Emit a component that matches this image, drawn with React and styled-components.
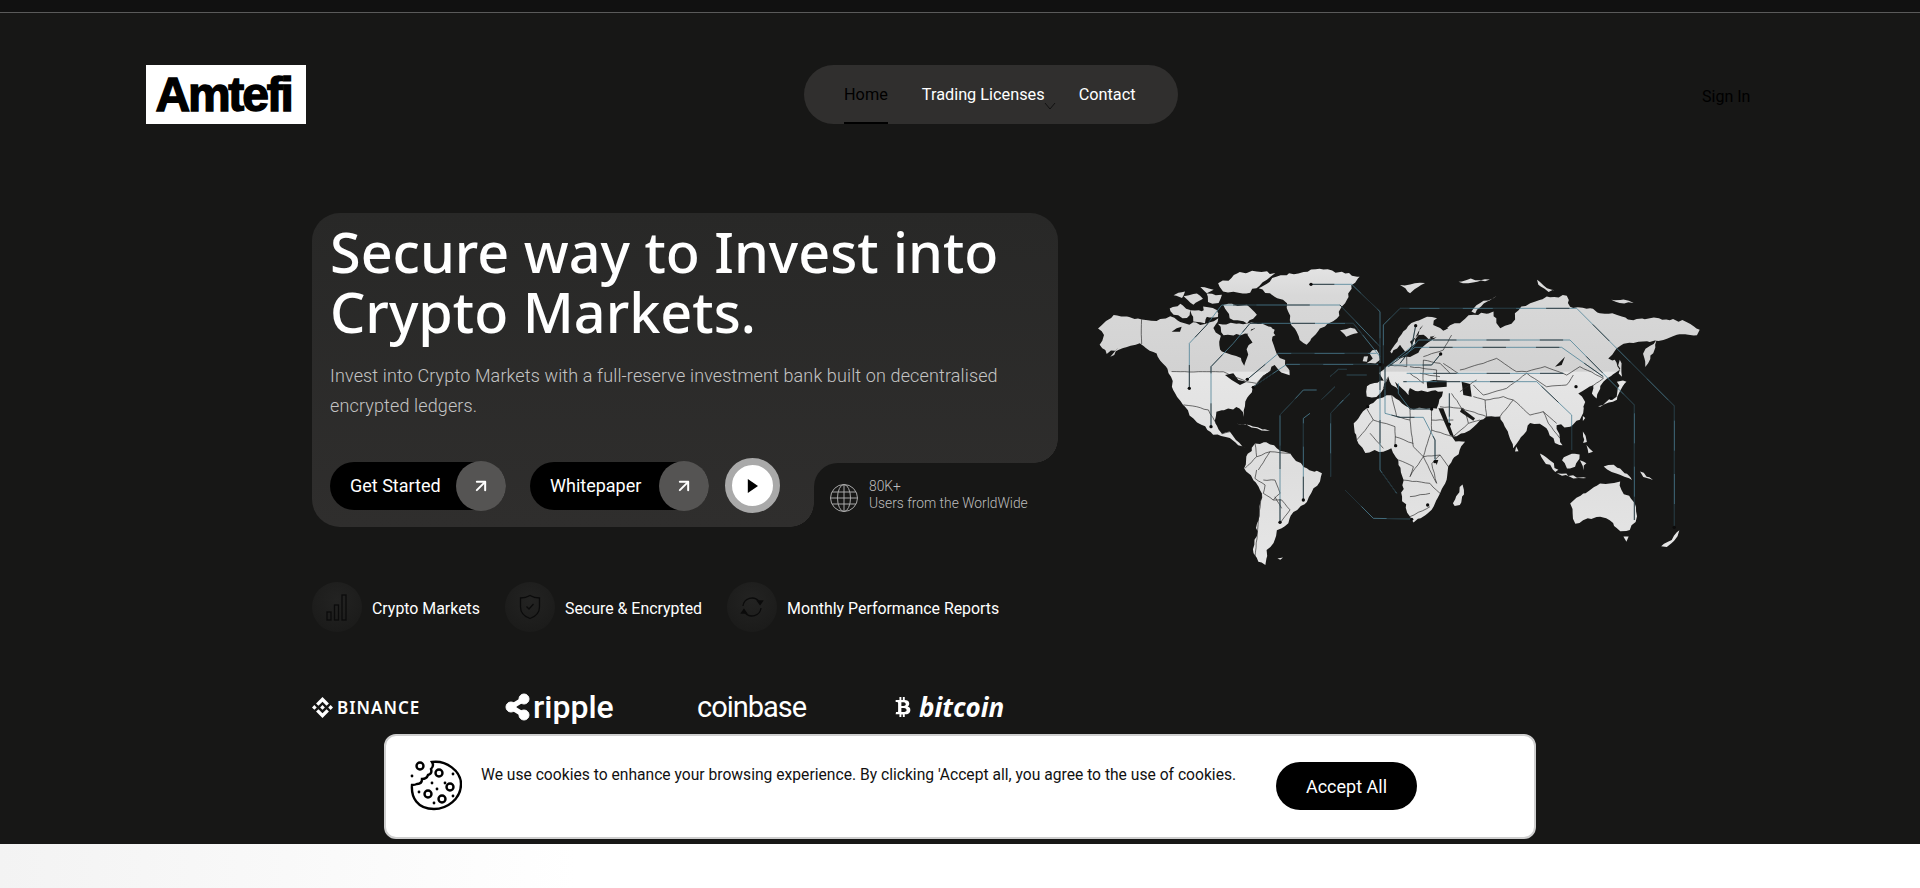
import React from 'react';
import styled, { createGlobalStyle } from 'styled-components';
import { ArrowUpRight } from 'lucide-react';
import { SiBinance } from 'react-icons/si';
import { FaBtc } from 'react-icons/fa';

const GlobalStyle = createGlobalStyle`
  html, body {
    margin: 0;
    padding: 0;
    background: #fff;
  }
  * {
    box-sizing: border-box;
  }
  body {
    font-family: Roboto, "Noto Sans", sans-serif;
    overflow: hidden;
  }
`;

const PAGE_BG = '#171716';

const Page = styled.div`
  width: 1920px;
  height: 888px;
  overflow: hidden;
  background: linear-gradient(90deg, #f3f3f3, #ffffff 30%);
`;

const TopStrip = styled.div`
  height: 13px;
  background: #111111;
  border-bottom: 1px solid #5a5a5a;
`;

const Dark = styled.div`
  height: 831px;
  background: ${PAGE_BG};
  overflow: hidden;
`;

const Header = styled.header`
  display: grid;
  grid-template-columns: 658px 898px auto;
  align-items: center;
  padding: 52px 0 0 146px;
`;

const Logo = styled.div`
  width: 160px;
  height: 59px;
  padding-right: 5px;
  background: #fff;
  color: #000;
  font-family: "Liberation Sans", sans-serif;
  font-weight: 700;
  font-size: 48px;
  letter-spacing: -2.2px;
  line-height: 59px;
  text-align: center;
  -webkit-text-stroke: 1.4px #000;
`;

const Nav = styled.nav`
  width: 374px;
  height: 59px;
  border-radius: 30px;
  background: #302f2e;
  display: flex;
  align-items: center;
  gap: 34px;
  padding-left: 40px;
`;

const NavItem = styled.a`
  position: relative;
  height: 59px;
  line-height: 59px;
  font-size: 16.3px;
  color: ${(p) => (p.$active ? '#000' : '#fff')};
  border-bottom: ${(p) => (p.$active ? '2px solid #000' : 'none')};
  white-space: nowrap;
`;

const Caret = styled.svg`
  position: absolute;
  right: -12px;
  top: 36px;
  width: 14px;
  height: 10px;
`;

const SignIn = styled.a`
  font-size: 16px;
  color: #000;
  padding-top: 3px;
`;

const HeroRow = styled.section`
  display: flex;
  align-items: flex-start;
  gap: 2px;
  margin: 89px 0 0 312px;
`;

const HeroCard = styled.div`
  position: relative;
  width: 746px;
  height: 314px;
  padding: 8px 18px 12px;
  border-radius: 28px;
  background: linear-gradient(180deg, #282827, #2f2e2d);
`;

const Title = styled.h1`
  margin: 0;
  font-family: "Noto Sans", sans-serif;
  font-size: 55.7px;
  line-height: 60px;
  font-weight: 500;
  color: #fff;
`;

const Lead = styled.p`
  margin: 20px 0 0;
  width: 680px;
  font-size: 18px;
  letter-spacing: 0.13px;
  line-height: 30px;
  font-weight: 300;
  color: #c4c4c4;
`;

const Actions = styled.div`
  display: flex;
  align-items: center;
  margin-top: 37px;
`;

const PillButton = styled.button`
  display: flex;
  align-items: center;
  justify-content: space-between;
  height: 48px;
  width: ${(p) => p.$w}px;
  margin-right: ${(p) => p.$mr}px;
  padding: 0 0 0 20px;
  border: 0;
  border-radius: 24px;
  background: #000;
  color: #fff;
  font-family: inherit;
  font-size: 18px;
`;

const ArrowCircle = styled.span`
  width: 50px;
  height: 50px;
  border-radius: 50%;
  background: #555453;
  color: #fff;
  display: flex;
  align-items: center;
  justify-content: center;
`;

const PlayButton = styled.button`
  width: 55px;
  height: 55px;
  border-radius: 50%;
  border: 7px solid #a9a9a9;
  background: #fff;
  padding: 0;
  display: flex;
  align-items: center;
  justify-content: center;
`;

const StatsNotch = styled.div`
  position: absolute;
  right: 0;
  bottom: 0;
  width: 244px;
  height: 64px;
  background: ${PAGE_BG};
  border-top-left-radius: 24px;
  display: flex;
  align-items: center;
  gap: 10px;
  padding: 6px 0 0 15px;

  &::before,
  &::after {
    content: '';
    position: absolute;
    width: 24px;
    height: 24px;
    background: radial-gradient(circle at 0 0, transparent 23.5px, ${PAGE_BG} 24px);
  }
  &::before {
    right: 0;
    top: -24px;
  }
  &::after {
    left: -24px;
    bottom: 0;
  }
`;

const StatsText = styled.div`
  margin-bottom: 7px;
  font-size: 13.8px;
  line-height: 17px;
  font-weight: 300;
  color: #bdbdbd;
`;

const Features = styled.div`
  display: flex;
  gap: 25px;
  margin: 2px 0 0 312px;
`;

const Feature = styled.div`
  display: flex;
  align-items: center;
  gap: 10px;
  padding-top: 2px;
  font-size: 15.9px;
  color: #fff;
`;

const FeatureIcon = styled.span`
  width: 50px;
  height: 50px;
  margin-top: -2px;
  border-radius: 50%;
  background: radial-gradient(circle at 50% 35%, #232322, #191918);
  display: flex;
  align-items: center;
  justify-content: center;
`;

const Brands = styled.div`
  display: flex;
  align-items: center;
  height: 40px;
  margin: 55px 0 0 312px;
  color: #fff;
`;

const Brand = styled.span`
  display: flex;
  align-items: center;
  gap: ${(p) => p.$gap || 4}px;
  width: ${(p) => p.$w}px;
  font-family: ${(p) => p.$font || '"Noto Sans"'}, sans-serif;
  font-size: ${(p) => p.$size}px;
  font-weight: ${(p) => p.$weight || 600};
  font-style: ${(p) => (p.$italic ? 'italic' : 'normal')};
  letter-spacing: ${(p) => p.$ls || 0}px;
`;

const CookieBar = styled.div`
  position: fixed;
  left: 384px;
  top: 734px;
  width: 1152px;
  height: 105px;
  background: #fff;
  border: 2px solid #cfcfcf;
  border-radius: 12px;
  display: flex;
  align-items: flex-start;
  padding: 23px 0 0 24px;
`;

const CookieText = styled.p`
  margin: 5px 0 0 19px;
  width: 795px;
  font-size: 15.65px;
  line-height: 22px;
  color: #111;
  white-space: nowrap;
`;

const AcceptButton = styled.button`
  width: 141px;
  height: 48px;
  margin-top: 3px;
  border: 0;
  border-radius: 24px;
  background: #000;
  color: #fff;
  font-family: inherit;
  font-size: 18px;
`;

const MapSvg = styled.svg`
  display: block;
  flex: none;
  width: 680px;
  height: 340px;
  margin-top: 27px;
`;

// map units are 1/3 px, origin at page (1090, 260)
const LAND = [
  '25,205 42,190 70,165 110,170 155,178 200,182 240,170 285,190 345,192 385,175 370,205 392,228 388,255 395,275 425,285 452,295 462,318 472,292 470,268 488,248 472,225 500,190 530,200 555,210 545,240 560,280 585,300 600,345 565,330 555,315 530,340 505,365 488,385 465,425 462,470 448,445 415,445 380,455 375,490 395,522 420,515 438,540 470,565 445,555 420,535 370,525 335,495 310,475 285,440 280,435 250,390 243,350 228,320 190,275 150,250 100,265 60,290 85,262 50,282 30,255 42,225',
  '385,190 500,190 480,222 400,226',
  '505,85 540,65 560,50 640,35 700,28 765,40 810,50 785,75 775,110 755,140 740,175 690,205 650,255 630,240 605,195 595,155 590,130 540,100',
  '750,210 795,205 805,220 770,230',
  '385,70 425,55 440,40 500,35 555,40 530,60 500,85 470,100 430,95 400,95',
  '240,145 270,130 300,150 290,175 250,165',
  '280,110 320,100 340,115 310,135',
  '340,140 380,150 385,170 350,170',
  '400,135 470,135 500,165 470,190 420,175',
  '300,150 360,150 345,190 310,185',
  '495,190 545,200 555,225 520,245 500,225',
  '330,80 370,90 350,100',
  '250,105 285,95 275,115',
  '350,100 395,105 385,130 355,125',
  '470,590 495,550 530,548 560,565 600,580 640,620 695,640 690,665 665,700 650,725 610,755 595,790 560,810 550,850 530,870 525,915 505,905 490,880 505,780 515,700 490,660 462,625',
  '440,490 480,495 540,513 500,505',
  '563,895 578,893 570,900',
  '790,490 830,445 862,418 905,405 935,430 960,445 1025,445 1050,447 1080,475 1090,500 1085,530 1095,545 1125,545 1110,570 1075,620 1070,660 1050,700 1015,760 970,787 960,770 935,710 940,660 925,600 905,565 880,575 855,570 825,578 800,540',
  '830,410 830,378 862,368 882,362 868,338 900,315 925,295 960,290 985,278 1010,250 1030,230 1060,215 1080,195 1110,190 1135,165 1150,165 1210,155 1220,190 1230,205 1265,190 1285,150 1320,130 1370,110 1430,108 1440,140 1500,145 1530,160 1580,165 1630,180 1680,175 1740,180 1790,185 1830,210 1820,225 1760,225 1720,240 1680,245 1645,245 1600,250 1580,265 1555,295 1575,300 1590,330 1550,355 1530,378 1520,415 1505,400 1510,375 1490,385 1465,400 1485,425 1475,470 1440,500 1400,495 1410,535 1418,555 1395,550 1370,505 1350,490 1320,490 1280,550 1270,565 1245,500 1230,470 1190,470 1170,480 1140,510 1090,530 1072,495 1040,445 1060,395 985,395 960,385 955,405 935,385 915,365 925,390 905,375 895,350 880,385 860,410',
  '900,275 925,235 965,190 1010,170 1040,175 1030,195 1060,205 1075,215 1040,225 1020,230 1030,250 1000,225 985,225 965,260 945,275 930,255 905,280',
  '838,280 860,268 870,298 855,310 830,310 848,295',
  '822,290 835,288 830,305 818,305',
  '1700,240 1660,280 1665,320 1690,280',
  '1525,440 1580,410 1590,375 1605,370 1590,395 1580,420 1530,440',
  '1580,365 1610,365 1590,380',
  '1590,300 1595,350 1585,340',
  '1478,468 1485,475 1478,482',
  '1478,515 1490,545 1480,548',
  '1490,555 1510,575 1495,580',
  '1350,580 1380,600 1405,630 1395,635 1360,600',
  '1400,640 1490,655 1450,655',
  '1415,600 1445,580 1470,585 1455,620 1430,625',
  '1470,600 1490,610 1480,630',
  '1540,620 1570,615 1620,650 1625,660 1580,640',
  '1650,635 1690,660 1660,650',
  '1440,730 1500,690 1530,670 1560,670 1590,665 1595,690 1635,730 1640,770 1620,810 1590,815 1560,780 1520,770 1455,790 1448,760',
  '1600,830 1615,830 1610,845',
  '1090,730 1118,672 1122,690 1110,735 1095,738',
  '1713,860 1745,840 1752,828 1768,812 1762,830 1730,860',
  '1278,560 1285,575 1275,575',
  '930,75 975,70 1005,70 985,80 960,100 945,85',
  '1145,155 1170,130 1220,108 1180,130 1155,160',
  '1105,65 1130,60 1200,58 1150,68',
  '1340,60 1370,85 1395,90 1375,95 1345,75',
  '1565,120 1600,118 1630,128 1590,128',
];

const WATER = [
  '960,245 985,225 990,205 1000,195 985,215 975,235 965,255',
  '1000,240 1040,232 1010,250',
  '1010,365 1030,360 1070,362 1070,380 1012,385',
  '1115,365 1140,372 1145,410 1120,405',
  '1115,445 1155,475 1150,482 1110,455',
  '1045,445 1060,445 1092,530 1080,525',
  '1395,320 1425,290 1415,315',
  '405,345 430,340 445,360 470,365 450,375 425,360',
  '260,205 275,200 270,215 245,215',
  '1035,600 1045,600 1040,615',
  '1040,195 1075,205 1060,212',
];

const BORDERS = [
  '155,178 155,252', '245,335 365,335 400,335 420,345 470,365 500,370 530,340', '280,435 320,440 355,450 375,485', '395,522 420,515',
  '495,550 500,590 465,625', '500,590 540,575 600,580', '500,630 495,655 525,675 520,700 550,720 570,700 555,660 520,660', '515,700 505,780 495,890', '550,720 575,720 600,750 570,790', '555,710 575,745', '540,575 505,630',
  '830,445 850,480 915,500 915,560', '905,405 920,470 960,480 970,560', '960,445 960,480', '1025,445 1025,510', '1025,480 1090,480', '850,480 800,540', '840,520 880,565', '915,530 970,550',
  '970,560 1000,590 1050,585 1075,620', '925,600 970,620 960,650', '1000,590 960,650', '1000,590 1040,670', '1050,585 1025,610 1040,670', '940,660 1020,670 1050,700', '960,710 1020,700', '960,770 1020,740', '1025,510 1000,590', '1025,510 1090,530',
  '880,385 895,350', '900,315 950,320', '950,320 950,290', '1000,300 1050,310 1080,340', '960,320 1040,330', '990,340 1050,350', '960,340 1000,370', '1000,300 1000,370', '1040,330 1040,365', '1085,225 1060,270 1000,290', '1060,310 1105,340',
  '1110,330 1180,310 1220,295 1280,335 1310,335 1365,320 1430,345 1470,320 1540,355 1500,385', '1310,340 1370,380 1430,375 1450,345',
  '1150,375 1180,405 1250,385 1310,340', '1150,410 1185,420 1190,470', '1185,420 1240,410 1270,420 1230,470', '1270,420 1320,465 1360,455 1375,490 1410,535', '1360,455 1400,490', '1085,400 1115,445 1190,470', '1050,440 1120,445 1135,490 1170,480', '1090,530 1135,490', '1110,395 1160,360',
];

const CIRCUITS = [
  '298,385 298,250 350,195 395,135 750,135 870,260',
  '363,500 363,320 430,250 480,190 790,190 870,290',
  '663,73 785,73 870,155 870,310',
  '472,358 565,280 860,280',
  '490,380 590,313 870,313',
  '570,787 570,465 640,390 680,390',
  '695,418 735,380',
  '770,345 830,345',
  '640,720 640,475 660,460',
  '720,350 745,328 770,328',
  '742,437 780,400',
  '722,650 722,460 760,420',
  '765,690 850,775 965,777',
  '870,320 870,630 920,700',
  '885,320 885,460 930,472 1000,472 1035,540 1035,600',
  '1078,400 1078,493',
  '1025,447 960,447 925,400 925,370',
  '1753,802 1753,438 1460,145 930,145 880,195 880,310',
  '1633,780 1633,435 1440,240 985,240 930,310',
  '1540,350 1415,262 975,262 895,320',
  '1445,570 1445,465 1340,365 940,365',
  '1420,340 950,340',
  '1052,282 1025,315 900,315',
  '977,197 965,260 890,320',
];

const DOTS = [
  [298, 385], [663, 73], [363, 500], [472, 358], [570, 787], [640, 720], [965, 778], [1013, 735], [917, 557],
  [833, 440], [1025, 447], [1078, 493], [1753, 802], [1458, 380], [1052, 282], [977, 197], [870, 313], [1563, 415], [1035, 605], [490, 382],
];

// deterministic wobble so the coastlines don't read as straight polygon edges
const rough = (pts, amp = 4, step = 13, closed = true) => {
  const p = pts.split(' ').map((s) => s.split(',').map(Number));
  let seed = p.length * 97 + p[0][0];
  const rnd = () => {
    seed = (seed * 9301 + 49297) % 233280;
    return seed / 233280 - 0.5;
  };
  const out = [];
  p.forEach(([x, y], i) => {
    if (!closed && i === p.length - 1) {
      out.push(`${x},${y}`);
      return;
    }
    const [nx, ny] = p[(i + 1) % p.length];
    const n = Math.max(1, Math.round(Math.hypot(nx - x, ny - y) / step));
    for (let k = 0; k < n; k++) {
      const t = k / n;
      const a = k === 0 ? 0.3 : 1;
      out.push(`${(x + (nx - x) * t + rnd() * amp * 2 * a).toFixed(1)},${(y + (ny - y) * t + rnd() * amp * 2 * a).toFixed(1)}`);
    }
  });
  return out.join(' ');
};

const WorldMap = () => (
  <MapSvg viewBox="-90 -60 2040 1020">
    <defs>
      <linearGradient id="land" gradientUnits="userSpaceOnUse" x1="0" y1="0" x2="0" y2="900">
        <stop offset="0" stopColor="#e6e6e6" />
        <stop offset="0.12" stopColor="#d8d8d8" />
        <stop offset="0.37" stopColor="#d2d2d2" />
        <stop offset="0.375" stopColor="#e6e6e6" />
        <stop offset="0.7" stopColor="#dedede" />
        <stop offset="1" stopColor="#e6e6e6" />
      </linearGradient>
    </defs>
    {LAND.map((pts) => (
      <polygon key={pts} points={rough(pts)} fill="url(#land)" />
    ))}
    {WATER.map((pts) => (
      <polygon key={pts} points={pts} fill={PAGE_BG} />
    ))}
    {BORDERS.map((pts) => (
      <polyline key={pts} points={rough(pts, 1.2, 14, false)} fill="none" stroke="#2a2a2a" strokeWidth="2" />
    ))}
    {CIRCUITS.map((pts) => (
      <g key={pts}>
        <polyline points={pts} fill="none" stroke="#4d8295" strokeWidth="2.4" />
        <polyline points={pts} fill="none" stroke="#111" strokeOpacity="0.7" strokeWidth="2.8" strokeDasharray="70 90" />
      </g>
    ))}
    {DOTS.map(([x, y]) => (
      <circle key={`${x}-${y}`} cx={x} cy={y} r="5" fill="#0c0c0c" />
    ))}
  </MapSvg>
);

const GlobeIcon = () => (
  <svg width="30" height="30" viewBox="0 0 30 30" fill="none" stroke="#a8a8a8" strokeWidth="1">
    <circle cx="15" cy="15" r="13.5" />
    <ellipse cx="15" cy="15" rx="6.5" ry="13.5" />
    <path d="M15 1.5v27M3 9h24M3 21h24M1.5 15h27" />
  </svg>
);

const BarsIcon = () => (
  <svg width="22" height="30" viewBox="0 0 22 30" fill="none" stroke="#0b0b0b" strokeWidth="1.3">
    <rect x="1" y="20" width="4" height="8" />
    <rect x="8.5" y="13" width="4" height="15" />
    <rect x="16" y="3" width="4" height="25" />
  </svg>
);

const ShieldIcon = () => (
  <svg width="22" height="26" viewBox="0 0 22 26" fill="none" stroke="#0b0b0b" strokeWidth="1.3">
    <path d="M11 1.5c3 1.8 6 2.5 9.5 2.5v9c0 5.5-4 9.500-9.500 11.500C5.500 22.500 1.500 18.500 1.500 13V4C5 4 8 3.300 11 1.500z" />
    <path d="M7.500 12.500l2.500 2.500 4.500-5" />
  </svg>
);

const SyncIcon = () => (
  <svg width="24" height="22" viewBox="0 0 24 22" fill="none" stroke="#0b0b0b" strokeWidth="1.3">
    <path d="M3 10a9 9 0 0 1 16-4.500" />
    <path d="M21 12a9 9 0 0 1-16 4.500" />
    <path d="M20 8.500l2.500-3.500h-5zM4 13.500L1.500 17h5z" fill="#0b0b0b" />
  </svg>
);

const RippleIcon = () => (
  <svg width="26" height="28" viewBox="0 0 26 28" fill="#fff" stroke="#fff">
    <circle cx="19" cy="6" r="5" />
    <circle cx="19" cy="22" r="5" />
    <circle cx="6" cy="14" r="5" />
    <path d="M6 14L19 6M6 14l13 8" strokeWidth="5" />
  </svg>
);

const CookieIcon = () => (
  <svg width="52" height="52" viewBox="0 0 52 52" fill="none" stroke="#000" strokeWidth="2.4">
    <path d="M22 3c2 3 1 5-1 7 1 3 0 5-3 6-1 3-3 4-6 4 0 3-2 5-5 5-2 1-4 1-5 1-1 12 5 24 22 24 13 0 27-10 27-25C51 12 36 1 22 3z" />
    <circle cx="10" cy="7" r="3.500" />
    <circle cx="29" cy="14" r="3.500" />
    <circle cx="40" cy="28" r="3.500" />
    <circle cx="18" cy="35" r="3.500" />
    <circle cx="32" cy="40" r="3.500" />
    <g fill="#000" stroke="none">
      <circle cx="2" cy="17" r="1.400" />
      <circle cx="22" cy="24" r="1.400" />
      <circle cx="35" cy="24" r="1.400" />
      <circle cx="27" cy="30" r="1.400" />
      <circle cx="43" cy="15" r="1.400" />
      <circle cx="9" cy="33" r="1.400" />
      <circle cx="24" cy="44" r="1.400" />
      <circle cx="43" cy="37" r="1.400" />
    </g>
  </svg>
);

const App = () => (
  <Page>
    <GlobalStyle />
    <TopStrip />
    <Dark>
      <Header>
        <Logo>Amtefi</Logo>
        <Nav>
          <NavItem $active>Home</NavItem>
          <NavItem>
            Trading Licenses
            <Caret viewBox="0 0 14 10" fill="none" stroke="#111" strokeWidth="1">
              <path d="M2 2l5 6 5-6" />
            </Caret>
          </NavItem>
          <NavItem>Contact</NavItem>
        </Nav>
        <SignIn>Sign In</SignIn>
      </Header>

      <HeroRow>
        <HeroCard>
          <Title>
            Secure way to Invest into
            <br />
            Crypto Markets.
          </Title>
          <Lead>Invest into Crypto Markets with a full-reserve investment bank built on decentralised encrypted ledgers.</Lead>
          <Actions>
            <PillButton $w={176} $mr={24}>
              Get Started
              <ArrowCircle>
                <ArrowUpRight size={20} strokeWidth={2.4} />
              </ArrowCircle>
            </PillButton>
            <PillButton $w={179} $mr={16}>
              Whitepaper
              <ArrowCircle>
                <ArrowUpRight size={20} strokeWidth={2.4} />
              </ArrowCircle>
            </PillButton>
            <PlayButton aria-label="Play">
              <svg width="11" height="14" viewBox="0 0 14 16" preserveAspectRatio="none">
                <path d="M1 0l13 8-13 8z" fill="#000" />
              </svg>
            </PlayButton>
          </Actions>
          <StatsNotch>
            <GlobeIcon />
            <StatsText>
              80K+
              <br />
              Users from the WorldWide
            </StatsText>
          </StatsNotch>
        </HeroCard>
        <WorldMap />
      </HeroRow>

      <Features>
        <Feature>
          <FeatureIcon>
            <BarsIcon />
          </FeatureIcon>
          Crypto Markets
        </Feature>
        <Feature>
          <FeatureIcon>
            <ShieldIcon />
          </FeatureIcon>
          Secure &amp; Encrypted
        </Feature>
        <Feature>
          <FeatureIcon>
            <SyncIcon />
          </FeatureIcon>
          Monthly Performance Reports
        </Feature>
      </Features>

      <Brands>
        <Brand $w={193} $size={17} $ls={1} $gap={4}>
          <SiBinance size={21} />
          BINANCE
        </Brand>
        <Brand $w={192} $size={32} $gap={2} $font="Roboto" $weight={500}>
          <RippleIcon />
          ripple
        </Brand>
        <Brand $w={196} $size={29} $weight={400} $font="Roboto" $ls={-1}>
          coinbase
        </Brand>
        <Brand $w={120} $size={26} $italic $weight={700} $gap={6}>
          <FaBtc size={20} />
          bitcoin
        </Brand>
      </Brands>
    </Dark>

    <CookieBar>
      <CookieIcon />
      <CookieText>We use cookies to enhance your browsing experience. By clicking 'Accept all, you agree to the use of cookies.</CookieText>
      <AcceptButton>Accept All</AcceptButton>
    </CookieBar>
  </Page>
);

export default App;
